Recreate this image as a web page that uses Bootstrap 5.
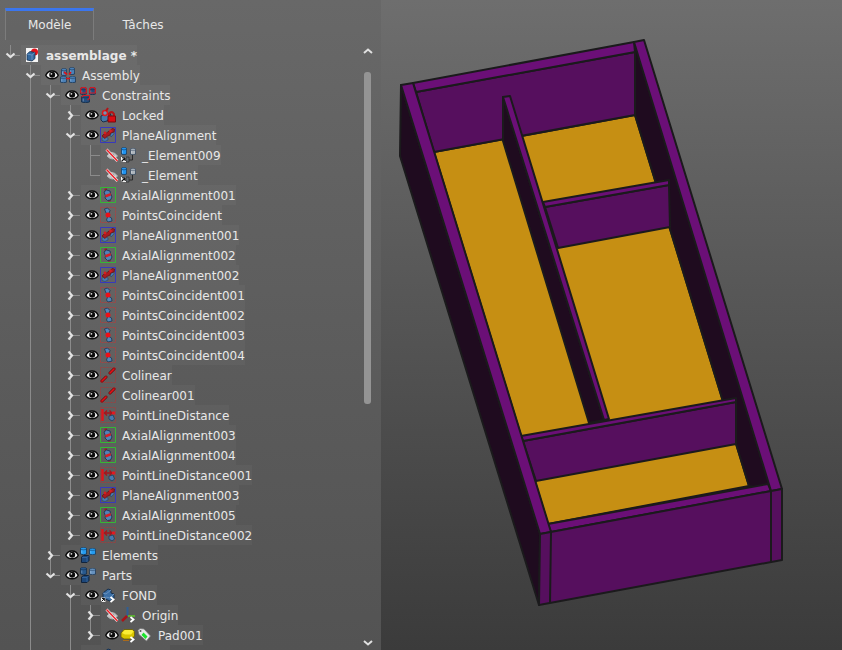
<!DOCTYPE html>
<html lang="fr">
<head>
<meta charset="utf-8">
<meta name="viewport" content="width=device-width, initial-scale=1">
<title>assemblage</title>
<link href="https://cdn.jsdelivr.net/npm/bootstrap@5.3.0/dist/css/bootstrap.min.css" rel="stylesheet">
<style>
body { font: 12px/20px "DejaVu Sans", Verdana, sans-serif; color: #e8e8e8; background: #3b3b3b; }
.side-panel { flex: 0 0 381px; background: linear-gradient(#686868, #5b5b5b 58%, #535353); }
.viewport { background: linear-gradient(#6e6e6e, #3b3b3b); min-width: 0; }
.panel-tabs { padding: 8px 5px 5px; }
.panel-tabs .nav-link { color: inherit; border: 0; border-radius: 0; padding: 4px 28px; border-top: 3px solid transparent; height: 32px; line-height: 19px; }
.panel-tabs .nav-link.active { background: rgba(0,0,0,.02); padding: 4px 22px; border-top-color: #3b76ee; border-left: 1px solid #7c7c7c; border-right: 1px solid #7c7c7c; }
.tree-row { height: 20px; white-space: nowrap; }
.tree-row svg { display: block; flex: none; }
.expander { width: 20px; height: 20px; flex: none; color: inherit; }
.tree-label { margin-left: 1px; padding-left: 3px; background: rgba(255,255,255,.035); height: 20px; }
.tree-label span { padding: 1px 0 0 6px; }
.tree-label.unnamed { width: 89px; }
.scroll-track { width: 27px; flex: none; }
.scroll-track button { color: #e0e0e0; height: 11px; }
.scroll-thumb { width: 7px; height: 332px; border-radius: 3px; background: #949494; }
</style>
<script src="https://cdn.jsdelivr.net/npm/bootstrap@5.3.0/dist/js/bootstrap.bundle.min.js"></script>
</head>
<body>
<svg class="d-none" aria-hidden="true">
  <symbol id="cyl" viewBox="0 0 8 8" preserveAspectRatio="none"><path d="M.5 1.500v5.500Q4 8.500 7.500 7V1.500z" fill="currentColor" stroke="#132b47" stroke-width=".8"/><ellipse cx="4" cy="1.600" rx="3.500" ry="1.200" fill="currentColor" stroke="#132b47" stroke-width=".5"/><path d="M2 3.500v3" stroke="#fff" stroke-opacity=".3"/></symbol>
  <symbol id="eye" viewBox="0 0 16 16"><path d="M1.800 8.200C4 2.500 12 2.500 14.200 8.200 12 13 4 13 1.800 8.200z" fill="#f6f6f6" stroke="#0c0c0c" stroke-width="1.500"/><circle cx="8.200" cy="7.800" r="3" fill="#0c0c0c"/><circle cx="7.400" cy="6.800" r=".9" fill="#ddd"/></symbol>
  <symbol id="hidden" viewBox="0 0 16 16"><path d="M3 9q5-7 10.500 0-5 6-10.500 0z" fill="#c9c9c9" stroke="#b4b4b4"/><circle cx="8.500" cy="8.500" r="2" fill="#909090"/><path d="M2.500 2.500 13.500 14" stroke="#eee" stroke-width="2.600"/><path d="M2.500 2.500 13.500 14" stroke="#ed1c24" stroke-width="1.400"/></symbol>
  <symbol id="doc" viewBox="0 0 16 16"><path d="M2 1h12v14H2z" fill="#f5f5f5"/><circle cx="10.500" cy="5" r="3.500" fill="#e2131c"/><path d="m3 7 3-2.500 5 1v6L8 14l-5-1z" fill="#34699f" stroke="#16304e" stroke-width=".8"/><path d="m3 7 5 1 3-2.500M8 8v5" fill="none" stroke="#6f9bc8" stroke-width=".8"/></symbol>
  <symbol id="asm" viewBox="0 0 16 16"><g color="#4b81b8"><use href="#cyl" x="1" y="1" width="6" height="8"/><use href="#cyl" x="9" y="0" width="6" height="8"/><use href="#cyl" x="0" y="9" width="7" height="7"/><use href="#cyl" x="9" y="9" width="7" height="7"/></g><path d="m4 5 3 2.500M11 5 9 7.500M6 11.500h4" stroke="#d91519" stroke-width="1.700"/></symbol>
  <symbol id="cons" viewBox="0 0 16 16"><g color="#244e7e"><use href="#cyl" x="0" y="0" width="7" height="8"/><use href="#cyl" x="9" y="0" width="7" height="8"/><use href="#cyl" x="1" y="8" width="9" height="8"/></g><path d="M.7 1.500Q3.500-.5 6.300 1.500v4.500H.7zM9.700 1.500q2.800-2 5.600 0V6H9.700zM1.500 10l2-1.500H9.500v3l-2 1.500" fill="none" stroke="#d91a20" stroke-width="1.200"/></symbol>
  <symbol id="lock" viewBox="0 0 16 16"><path d="M1 9 5 7l5-1 1 3-4 5-4 1-2-2z" fill="#4678aa" stroke="#172f4b"/><circle cx="5" cy="6" r="2.500" fill="#7194b7" stroke="#dc1b20" stroke-width="1.500"/><path d="M6 4 8 1M9 9.500V7q2.500-4 5 0v2.500" fill="none" stroke="#b51216" stroke-width="2"/><path d="M8 9h7.500v6H8z" fill="#db0b12" stroke="#790b0e"/></symbol>
  <symbol id="plane" viewBox="0 0 16 16"><path d="M.5.500h15v15H.5z" fill="none" stroke="#3838bd"/><path d="m2 11 3-2 3 2v2l-3 1.500-3-1zM10 6l4-3v4l-3 3z" fill="#477aae" stroke="#23476d" stroke-width=".6"/><path d="m2 9 2-2 2-.5 2-2 2-.5 2-2.500 2.500.5L14 5l-3 1-1.500 2.500-2 .5L5 11.500z" fill="#a81b20" stroke="#651418" stroke-width=".8"/><circle cx="5" cy="6" r="1.400" fill="#d91c22"/><circle cx="10.500" cy="4" r="1.400" fill="#d91c22"/></symbol>
  <symbol id="axial" viewBox="0 0 16 16"><path d="M.5.500h15v15H.5z" fill="none" stroke="#35b735"/><path d="M5.500 1.500 6 4m3 8 .5 2.500" stroke="#9b1b20" stroke-width="2.500"/><path d="m4 5 2.500-2L10 4l.5 2.500L12 10l-1.500 3-3 .5L5 11l.5-2z" fill="#5183b8" stroke="#1c3657" stroke-width=".9"/><path d="m5 8 5.500-2 .5 2.500L6 10.500z" fill="#d91c22"/></symbol>
  <symbol id="point" viewBox="0 0 16 16"><path d="M.5.500h15v15H.5z" fill="none" stroke="#b73c3c" stroke-opacity=".8" stroke-dasharray="2 1"/><path d="m4.500 2 3-1 2.500 2.500-1.500 4L6 6zM8 9l3.500 2 .5 3-4 1-1.500-2z" fill="#5586b8" stroke="#1b3555" stroke-width=".8"/><circle cx="8" cy="8" r="2.500" fill="#ee1017"/></symbol>
  <symbol id="colin" viewBox="0 0 16 16"><path d="M.5.500h15v15H.5z" fill="none" stroke="#a43c3c" stroke-opacity=".8" stroke-dasharray="2 1"/><path d="m2 14 4-4M10 6l4-4" stroke="#6d090b" stroke-width="3" stroke-linecap="round"/><path d="m2 14 4-4M10 6l4-4" stroke="#e11218" stroke-width="1.700" stroke-linecap="round"/></symbol>
  <symbol id="dist" viewBox="0 0 16 16"><path d="M.5.500h15v15H.5z" fill="none" stroke="#a43c3c" stroke-opacity=".8" stroke-dasharray="2 1"/><path d="m9 9 4-1 1.500 4-2.500 2-3-2z" fill="#477aae" stroke="#203d5d" stroke-width=".8"/><path d="M2.500 2v12" stroke="#dc171d" stroke-width="2.500"/><path d="M4 6h9M7 3.500 4.500 6 7 8.500M9.500 3.500 12 6 9.500 8.500" fill="none" stroke="#a6151b" stroke-width="1.300"/><circle cx="13.500" cy="6" r="1.700" fill="#e51820"/></symbol>
  <symbol id="elem" viewBox="0 0 16 16"><path d="M12.500 8v5H7" fill="none" stroke="#2b2b2b"/><use href="#cyl" x="1" y="0" width="6" height="8" color="#2195f2"/><use href="#cyl" x="10" y="1" width="6" height="7" color="#aeb6bd"/><path d="M6 10h3v5H6z" fill="#656b70" stroke="#333" stroke-width=".8"/><path d="M1 10h5v5H1z" fill="#f4f4f4"/><path d="m1.500 14.500 3.500-3.500M2 10.800h3.200V14" fill="none" stroke="#111" stroke-width="1.100"/></symbol>
  <symbol id="elements" viewBox="0 0 16 16"><use href="#cyl" x="0" y="0" width="7" height="8" color="#259cf0"/><use href="#cyl" x="9" y="1" width="7" height="7" color="#259cf0"/><path d="m1.500 10 2-1.500h5.500v5L7 15.500H1.500z" fill="#1d477a" stroke="#11243d"/><path d="M2 10.500h5l2-2M7 10.500V15" fill="none" stroke="#3f71a8" stroke-width=".7"/></symbol>
  <symbol id="parts" viewBox="0 0 16 16"><use href="#cyl" x="0" y="0" width="7" height="8" color="#28598e"/><use href="#cyl" x="9" y="1" width="7" height="7" color="#6792bf"/><path d="m1.500 10 2-1.500h5.500v5L7 15.500H1.500z" fill="#1d477a" stroke="#11243d"/><path d="M2 10.500h5l2-2M7 10.500V15" fill="none" stroke="#3f71a8" stroke-width=".7"/></symbol>
  <symbol id="body" viewBox="0 0 16 16"><path d="m3 6 5-4 3 1v3l3 1v4l-4 3-7-3z" fill="#3b6fa6" stroke="#17304e"/><path d="m3 6 3 1 5-4M6 10l4 1 4-4" fill="none" stroke="#6991bd"/><path d="M1 10.500h4.500V15H1z" fill="#eee"/><path d="m1.500 14.500 3-3H2m2.700 0v2.500" fill="none" stroke="#111"/><path d="m10.500 10 3 2.500-3 2.500" fill="none" stroke="#fff" stroke-width="1.800"/></symbol>
  <symbol id="origin" viewBox="0 0 16 16"><path d="M7.500 0v9" stroke="#315e92" stroke-width="2"/><path d="M8 9h7" stroke="#5cb530" stroke-width="1.800"/><path d="m7 9-5 5" stroke="#a91419" stroke-width="2.500"/><path d="m10.500 10 3 2.500-3 2.500" fill="none" stroke="#fff" stroke-width="1.800"/></symbol>
  <symbol id="pad" viewBox="0 0 16 16"><path d="m1 6 3-3.500h8.500l2 2V9l-3 3H4l-3-2z" fill="#d9c500" stroke="#685e05" stroke-width=".8"/><path d="m2 6 3-3h7l1.500 1.500L11 7.500H5z" fill="#fbed35"/><path d="M3 13.500h6" stroke="#a96a1c"/><path d="m10.500 10 3 2.500-3 2.500" fill="none" stroke="#fff" stroke-width="1.800"/></symbol>
  <symbol id="tag" viewBox="0 0 16 16"><path d="M2 3.500 4 1.500l4 .5 6.500 7-4 5L3 7.500z" fill="#e8e8e8" stroke="#777" stroke-width=".8"/><path d="M7.500 5.500 11.500 9.500 9.500 12 5.500 8z" fill="#19e52b"/><circle cx="4.500" cy="4" r="1" fill="#555"/></symbol>
</svg>

<div class="d-flex vh-100 overflow-hidden">
  <aside class="side-panel d-flex flex-column">
    <ul class="nav panel-tabs" role="tablist">
      <li class="nav-item" role="presentation"><button class="nav-link active" type="button" role="tab" aria-selected="true">Modèle</button></li>
      <li class="nav-item" role="presentation"><button class="nav-link bg-transparent" type="button" role="tab" aria-selected="false">Tâches</button></li>
    </ul>
    <div class="d-flex flex-fill overflow-hidden">
      <ul id="tree" class="list-unstyled flex-fill overflow-hidden mb-0" role="tree" aria-label="Modèle"></ul>
      <div class="scroll-track d-flex flex-column align-items-center">
        <button class="btn p-0 border-0 d-flex" type="button" aria-label="Défiler vers le haut"><svg width="10" height="12"><path d="m1 8 4-3.500L9 8" fill="none" stroke="currentColor" stroke-width="2"/></svg></button>
        <div class="flex-fill pt-3 mb-auto"><div class="scroll-thumb"></div></div>
        <button class="btn p-0 border-0 d-flex mb-1" type="button" aria-label="Défiler vers le bas"><svg width="10" height="12"><path d="m1 6 4 3.500L9 6" fill="none" stroke="currentColor" stroke-width="2"/></svg></button>
      </div>
    </div>
  </aside>

  <main class="viewport flex-fill">
    <svg class="w-100 h-100 d-block" viewBox="381 0 461 650" role="img" aria-label="Vue 3D de l'assemblage">
      <g stroke="#1b1a1c" stroke-width="2" stroke-linejoin="round">
        <path fill="#1f0b1f" d="m401 85 139 449-1 71-139-449z"/>
        <path fill="#c68f13" d="m434 152 201-37 114 371-201 38z"/>
        <path fill="#560f5e" d="m416 92 219-40v63l-201 37z"/>
        <path fill="#6b0f77" d="m413 83 221-41 1 10-219 40z"/>
        <path fill="#1f0b1f" d="m635 43 136 447-22-4-114-371z"/>
        <path fill="#560f5e" d="m545 207 124-22 1 42-112 21z"/>
        <path fill="#6b0f77" d="m543 202 126-22v5l-124 22z"/>
        <path fill="#1f0b1f" d="M503 97v44l86 282 15-3z"/>
        <path fill="#6b0f77" d="m503 97 7-1 99 323-5 1z"/>
        <path fill="#560f5e" d="m523 441 213-39v42l-200 37z"/>
        <path fill="#6b0f77" d="m521 436 215-38v4l-213 39z"/>
        <path fill="#6b0f77" d="m548 524 220-40 3 7-220 41z"/>
        <path fill="#6b0f77" d="m401 85 12-2 138 449-11 2z"/>
        <path fill="#6b0f77" d="m634 42 10-2 138 449-11 2z"/>
        <path fill="#560f5e" d="m540 534 242-45v71l-243 45z"/>
        <path fill="none" d="m551 532-1 71M771 491v71"/>
      </g>
    </svg>
  </main>
</div>

<script>
/* Each row: guides, icons, name. Guide letters, one per level:
   "|" passing line, "." blank, "v"/"V" open node (more siblings / last),
   ">" closed node, ")" last closed node, "+" leaf, "L" last leaf. */
const rows = [
  ["V", "doc", "assemblage *"],
  [".v", "eye asm", "Assembly"],
  [".|v", "eye cons", "Constraints"],
  [".||>", "eye lock", "Locked"],
  [".||v", "eye plane", "PlaneAlignment"],
  [".|||+", "hidden elem", "_Element009"],
  [".|||L", "hidden elem", "_Element"],
  [".||>", "eye axial", "AxialAlignment001"],
  [".||>", "eye point", "PointsCoincident"],
  [".||>", "eye plane", "PlaneAlignment001"],
  [".||>", "eye axial", "AxialAlignment002"],
  [".||>", "eye plane", "PlaneAlignment002"],
  [".||>", "eye point", "PointsCoincident001"],
  [".||>", "eye point", "PointsCoincident002"],
  [".||>", "eye point", "PointsCoincident003"],
  [".||>", "eye point", "PointsCoincident004"],
  [".||>", "eye colin", "Colinear"],
  [".||>", "eye colin", "Colinear001"],
  [".||>", "eye dist", "PointLineDistance"],
  [".||>", "eye axial", "AxialAlignment003"],
  [".||>", "eye axial", "AxialAlignment004"],
  [".||>", "eye dist", "PointLineDistance001"],
  [".||>", "eye plane", "PlaneAlignment003"],
  [".||>", "eye axial", "AxialAlignment005"],
  [".||)", "eye dist", "PointLineDistance002"],
  [".|>", "eye elements", "Elements"],
  [".|V", "eye parts", "Parts"],
  [".|.v", "eye body", "FOND"],
  [".|.|>", "hidden origin", "Origin"],
  [".|.|)", "eye pad tag", "Pad001"],
  [".|.>", "eye body", ""]
];
const chevronDown = '<path d="m6.500 8.500 4 3.500 4-3.500" fill="none" stroke="#e2e2e2" stroke-width="2.200"/>';
const chevronRight = '<path d="m8.500 6.500 3.500 4-3.500 4" fill="none" stroke="#e2e2e2" stroke-width="2.200"/>';

function guide(kind) {
  let lines = "";
  if (kind !== ".") {
    const full = "|v>+".includes(kind);
    lines += `<path d="M10.500 0v${full ? 20 : 10}" stroke="#8b8b8b"/>`;
    if (kind !== "|") lines += '<path d="M10 10.500h10" stroke="#8b8b8b"/>';
  }
  const open = "vV".includes(kind), closed = ">)".includes(kind);
  const svg = `<svg width="20" height="20" aria-hidden="true">${lines}${open ? chevronDown : closed ? chevronRight : ""}</svg>`;
  return open || closed
    ? `<button class="expander btn p-0 border-0 rounded-0" type="button" aria-label="${open ? "Réduire" : "Développer"}">${svg}</button>`
    : svg;
}

document.getElementById("tree").innerHTML = rows.map(([guides, icons, name], i) => {
  const cells = [...guides].map(guide).join("");
  const pics = icons.split(" ").map(id => `<svg width="16" height="16" aria-hidden="true"><use href="#${id}"/></svg>`).join("");
  return `<li class="tree-row d-flex" role="treeitem" aria-level="${guides.length}">${cells}` +
    `<div class="tree-label d-flex align-items-center${name ? "" : " unnamed"}${i ? "" : " fw-bold"}">${pics}<span>${name}</span></div></li>`;
}).join("");
</script>
</body>
</html>
